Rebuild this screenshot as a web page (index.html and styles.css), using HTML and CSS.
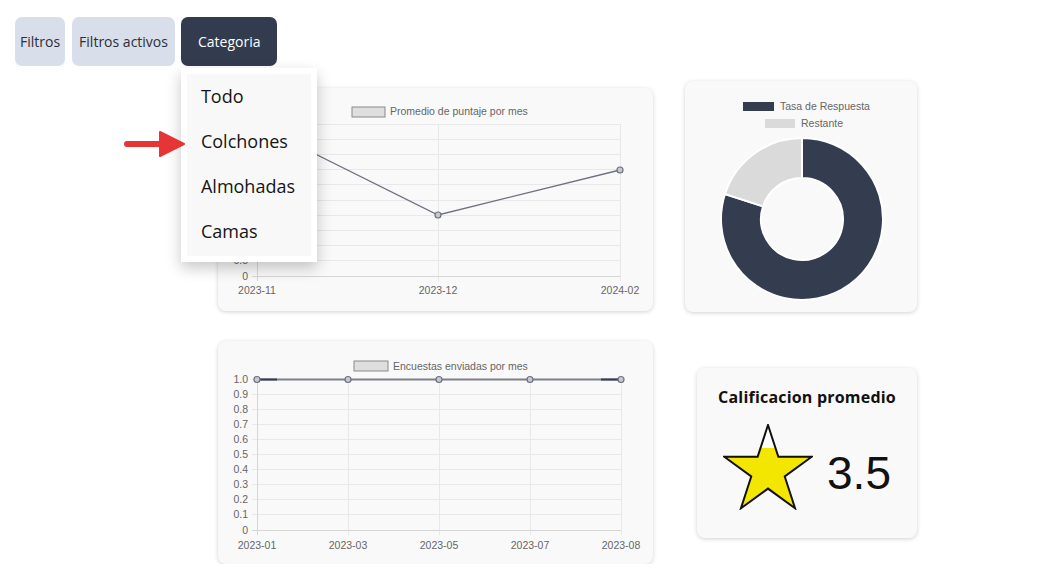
FILE: index.html
```html
<!DOCTYPE html>
<html lang="es">
<head>
<meta charset="utf-8">
<title>Dashboard</title>
<link rel="stylesheet" href="styles.css">
</head>
<body>
<header class="toolbar">
  <button class="btn btn-light btn-filtros">Filtros</button>
  <button class="btn btn-light btn-activos">Filtros activos</button>
  <div class="dropdown">
    <button class="btn btn-dark">Categoria</button>
    <ul class="menu">
      <li>Todo</li>
      <li>Colchones</li>
      <li>Almohadas</li>
      <li>Camas</li>
    </ul>
  </div>
</header>

<svg class="pointer-arrow" width="64" height="28" viewBox="0 0 64 28">
  <path d="M4 14 H40" stroke="#e53535" stroke-width="6" stroke-linecap="round"/>
  <path d="M37 2 L61 14 L37 26 Z" fill="#e53535" stroke="#e53535" stroke-width="2" stroke-linejoin="round"/>
</svg>

<main class="dashboard">
  <section class="card chart-card chart-card-top">
    <svg class="chart" width="434" height="223" viewBox="0 0 434 223">
      <rect x="134" y="19" width="33" height="10" fill="#dedede" stroke="#8a8a8a" stroke-width="1"/>
      <text x="172" y="27" class="legend">Promedio de puntaje por mes</text>
      <g stroke="#e8e8e8" stroke-width="1">
        <line x1="34" y1="36.5" x2="402" y2="36.5"/>
        <line x1="34" y1="51.5" x2="402" y2="51.5"/>
        <line x1="34" y1="66.5" x2="402" y2="66.5"/>
        <line x1="34" y1="81.5" x2="402" y2="81.5"/>
        <line x1="34" y1="96.5" x2="402" y2="96.5"/>
        <line x1="34" y1="112.5" x2="402" y2="112.5"/>
        <line x1="34" y1="127.5" x2="402" y2="127.5"/>
        <line x1="34" y1="142.5" x2="402" y2="142.5"/>
        <line x1="34" y1="157.5" x2="402" y2="157.5"/>
        <line x1="34" y1="172.5" x2="402" y2="172.5"/>
        <line x1="220.5" y1="36" x2="220.5" y2="193"/>
        <line x1="402.5" y1="36" x2="402.5" y2="193"/>
      </g>
      <g stroke="#d6d6d6" stroke-width="1">
        <line x1="34" y1="188.5" x2="402" y2="188.5"/>
        <line x1="39.5" y1="36" x2="39.5" y2="193"/>
      </g>
      <g class="tick" text-anchor="end">
        <text x="30" y="176">0.5</text>
        <text x="30" y="192">0</text>
      </g>
      <g class="tick" text-anchor="middle">
        <text x="39" y="206">2023-11</text>
        <text x="220" y="206">2023-12</text>
        <text x="402" y="206">2024-02</text>
      </g>
      <polyline points="39,37 220,127 402,82" fill="none" stroke="#6c7080" stroke-width="1.3"/>
      <g fill="#c8c8cc" stroke="#6c7080" stroke-width="1.2">
        <circle cx="39" cy="37" r="3"/>
        <circle cx="220" cy="127" r="3"/>
        <circle cx="402" cy="82" r="3"/>
      </g>
    </svg>
  </section>

  <section class="card donut-card">
    <svg class="chart" width="232" height="231" viewBox="0 0 232 231">
      <rect x="58" y="21" width="31" height="9" fill="#343c50"/>
      <text x="95" y="29" class="legend">Tasa de Respuesta</text>
      <rect x="80" y="38" width="30" height="9" fill="#dadada"/>
      <text x="116" y="46" class="legend">Restante</text>
      <path d="M117 57 A81 81 0 1 1 39.96 112.97 L78 125.33 A41 41 0 1 0 117 97 Z" fill="#343c50" stroke="#fff" stroke-width="2" stroke-linejoin="round"/>
      <path d="M39.96 112.97 A81 81 0 0 1 117 57 L117 97 A41 41 0 0 0 78 125.33 Z" fill="#dadada" stroke="#fff" stroke-width="2" stroke-linejoin="round"/>
    </svg>
  </section>

  <section class="card chart-card">
    <svg class="chart" width="435" height="223" viewBox="0 0 435 223">
      <rect x="136" y="20" width="34" height="10" fill="#dedede" stroke="#8a8a8a" stroke-width="1"/>
      <text x="175" y="29" class="legend">Encuestas enviadas por mes</text>
      <g stroke="#e8e8e8" stroke-width="1">
        <line x1="34" y1="38.5" x2="403" y2="38.5"/>
        <line x1="34" y1="53.5" x2="403" y2="53.5"/>
        <line x1="34" y1="68.5" x2="403" y2="68.5"/>
        <line x1="34" y1="83.5" x2="403" y2="83.5"/>
        <line x1="34" y1="98.5" x2="403" y2="98.5"/>
        <line x1="34" y1="113.5" x2="403" y2="113.5"/>
        <line x1="34" y1="128.5" x2="403" y2="128.5"/>
        <line x1="34" y1="143.5" x2="403" y2="143.5"/>
        <line x1="34" y1="158.5" x2="403" y2="158.5"/>
        <line x1="34" y1="173.5" x2="403" y2="173.5"/>
        <line x1="130.5" y1="38" x2="130.5" y2="194"/>
        <line x1="221.5" y1="38" x2="221.5" y2="194"/>
        <line x1="312.5" y1="38" x2="312.5" y2="194"/>
        <line x1="403.5" y1="38" x2="403.5" y2="194"/>
      </g>
      <g stroke="#d6d6d6" stroke-width="1">
        <line x1="34" y1="189.5" x2="403" y2="189.5"/>
        <line x1="39.5" y1="38" x2="39.5" y2="194"/>
      </g>
      <g class="tick" text-anchor="end">
        <text x="30" y="42">1.0</text>
        <text x="30" y="57">0.9</text>
        <text x="30" y="72">0.8</text>
        <text x="30" y="87">0.7</text>
        <text x="30" y="102">0.6</text>
        <text x="30" y="117">0.5</text>
        <text x="30" y="132">0.4</text>
        <text x="30" y="147">0.3</text>
        <text x="30" y="162">0.2</text>
        <text x="30" y="177">0.1</text>
        <text x="30" y="193">0</text>
      </g>
      <g class="tick" text-anchor="middle">
        <text x="39" y="208">2023-01</text>
        <text x="130" y="208">2023-03</text>
        <text x="221" y="208">2023-05</text>
        <text x="312" y="208">2023-07</text>
        <text x="403" y="208">2023-08</text>
      </g>
      <line x1="39" y1="38.5" x2="403" y2="38.5" stroke="#7c808c" stroke-width="2"/>
      <line x1="39" y1="38.5" x2="59" y2="38.5" stroke="#343c50" stroke-width="2"/>
      <line x1="383" y1="38.5" x2="403" y2="38.5" stroke="#343c50" stroke-width="2"/>
      <g fill="#c8c8cc" stroke="#6c7080" stroke-width="1.2">
        <circle cx="39" cy="38.5" r="3"/>
        <circle cx="130" cy="38.5" r="3"/>
        <circle cx="221" cy="38.5" r="3"/>
        <circle cx="312" cy="38.5" r="3"/>
        <circle cx="403" cy="38.5" r="3"/>
      </g>
    </svg>
  </section>

  <section class="card rating-card">
    <h2 class="rating-title">Calificacion promedio</h2>
    <div class="rating-body">
      <svg class="star" width="90" height="86" viewBox="0 0 90 86">
        <defs>
          <linearGradient id="starFill" x1="0" y1="0" x2="0" y2="1">
            <stop offset="0.28" stop-color="#ffffff"/>
            <stop offset="0.28" stop-color="#f3e600"/>
          </linearGradient>
        </defs>
        <polygon points="45,1 55.35,32.76 88.75,32.79 61.74,52.44 72.04,84.21 45,64.6 17.96,84.21 28.26,52.44 1.25,32.79 34.65,32.76" fill="url(#starFill)" stroke="#111" stroke-width="2" stroke-linejoin="miter"/>
      </svg>
      <span class="rating-value">3.5</span>
    </div>
  </section>
</main>
</body>
</html>
```

FILE: styles.css
```css
* {
  box-sizing: border-box;
}

body {
  margin: 0;
  background: #ffffff;
  font-family: "Open Sans", "Noto Sans", sans-serif;
  color: #222;
  position: relative;
}

.toolbar {
  display: flex;
  align-items: flex-start;
  gap: 6px;
  padding: 17px 0 0 15px;
  position: relative;
  z-index: 5;
}

.btn {
  height: 49px;
  border: none;
  border-radius: 7px;
  font-family: "Open Sans", "Noto Sans", sans-serif;
  font-size: 14px;
  font-weight: 500;
  padding: 0 6px;
}

.btn-light {
  background: #d8deea;
  color: #2b2f38;
}

.btn-filtros {
  padding: 0 5px;
  margin-right: 1px;
}

.btn-activos {
  padding: 0 7px;
}

.btn-dark {
  background: #333c4f;
  color: #ffffff;
  padding: 0 17px;
}

.dropdown {
  position: relative;
}

.menu {
  position: absolute;
  top: 51px;
  left: 0;
  width: 136px;
  margin: 0;
  padding: 6px;
  list-style: none;
  background: #ffffff;
  box-shadow: 0 6px 14px rgba(0, 0, 0, 0.22);
  z-index: 10;
}

.menu li {
  background: #f8f8f8;
  height: 45px;
  line-height: 45px;
  padding-left: 14px;
  font-size: 18px;
  color: #151515;
}

.menu li:last-child {
  height: 47px;
}

.pointer-arrow {
  position: absolute;
  left: 123px;
  top: 130px;
  z-index: 6;
}

.dashboard {
  display: grid;
  grid-template-columns: 435px 232px;
  column-gap: 32px;
  row-gap: 29px;
  padding: 15px 0 0 218px;
  align-items: center;
}

.card {
  background: #f9f9f9;
  border-radius: 8px;
  box-shadow: 0 1px 4px rgba(0, 0, 0, 0.18);
}

.chart {
  display: block;
}

.chart .legend,
.chart .tick {
  font-family: "Liberation Sans", Arial, sans-serif;
  font-size: 10.5px;
  fill: #666666;
}

.chart-card {
  height: 223px;
}

.chart-card-top {
  margin-top: 6px;
}

.donut-card {
  height: 231px;
}

.rating-card {
  width: 220px;
  height: 170px;
  justify-self: end;
  display: flex;
  flex-direction: column;
  align-items: center;
  padding-top: 19px;
}

.rating-title {
  margin: 0;
  font-size: 16px;
  font-weight: 700;
  letter-spacing: 0.2px;
  line-height: 20px;
  color: #111;
}

.rating-body {
  display: flex;
  align-items: center;
  gap: 14px;
  margin-top: 17px;
}

.star {
  display: block;
}

.rating-value {
  font-family: "Liberation Sans", Arial, sans-serif;
  font-size: 46px;
  line-height: 1;
  color: #111;
  margin-top: 12px;
}
```
